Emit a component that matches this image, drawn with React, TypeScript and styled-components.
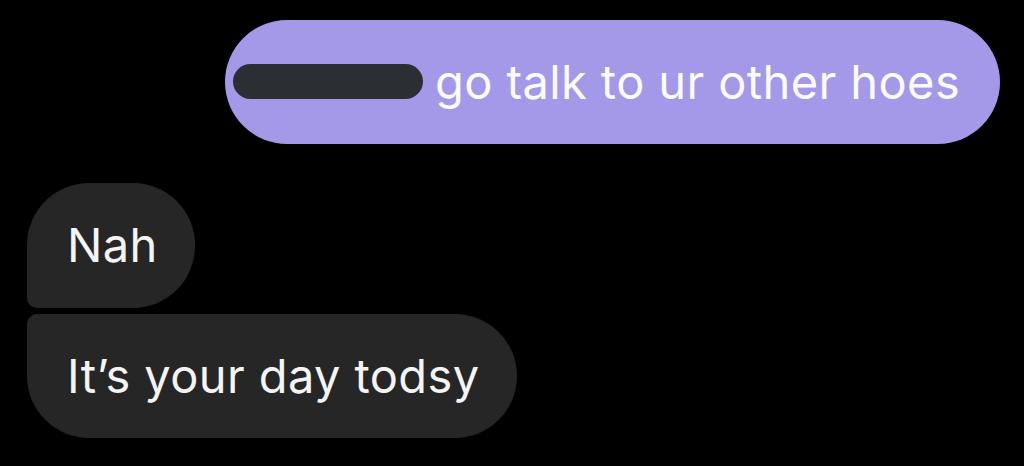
import React from "react";
import styled, { createGlobalStyle } from "styled-components";

const Global = createGlobalStyle`
  html, body { margin: 0; padding: 0; background: #000; }
  body { font-family: Inter, "Noto Sans", sans-serif; -webkit-font-smoothing: antialiased; }
`;

const Thread = styled.div`
  width: 1024px;
  height: 466px;
  background: #000;
  box-sizing: border-box;
  padding: 20px 24px 0 27px;
  display: flex;
  flex-direction: column;
  overflow: hidden;
`;

const Row = styled.div<{ $mine?: boolean; $gap?: number }>`
  display: flex;
  justify-content: ${(p) => (p.$mine ? "flex-end" : "flex-start")};
  margin-top: ${(p) => p.$gap ?? 0}px;
`;

const Bubble = styled.div<{ $mine?: boolean; $w: number; $h: number; $radius: string }>`
  box-sizing: border-box;
  width: ${(p) => p.$w}px;
  height: ${(p) => p.$h}px;
  border-radius: ${(p) => p.$radius};
  background: ${(p) => (p.$mine ? "#a499e8" : "#262626")};
  color: ${(p) => (p.$mine ? "#fbfaff" : "#f4f4f4")};
  display: flex;
  align-items: center;
  gap: 12px;
  padding: ${(p) => (p.$mine ? "0 0 0 8px" : "0 0 0 40px")};
  font-size: 47px;
  letter-spacing: 0.4px;
  white-space: nowrap;
`;

const Redact = styled.span`
  display: inline-block;
  width: 190px;
  height: 35px;
  margin-top: -2px;
  border-radius: 18px;
  background: #2b2e33;
  flex: none;
`;

const Text = styled.span`
  line-height: 1;
  padding-bottom: 2px;
`;

export default function App() {
  return (
    <>
      <Global />
      <Thread>
        <Row $mine>
          <Bubble $mine $w={775} $h={124} $radius="62px">
            <Redact />
            <Text>go talk to ur other hoes</Text>
          </Bubble>
        </Row>
        <Row $gap={39}>
          <Bubble $w={168} $h={125} $radius="62px 62px 62px 10px">
            <Text>Nah</Text>
          </Bubble>
        </Row>
        <Row $gap={6}>
          <Bubble $w={490} $h={124} $radius="10px 62px 62px 62px">
            <Text>It’s your day todsy</Text>
          </Bubble>
        </Row>
      </Thread>
    </>
  );
}
